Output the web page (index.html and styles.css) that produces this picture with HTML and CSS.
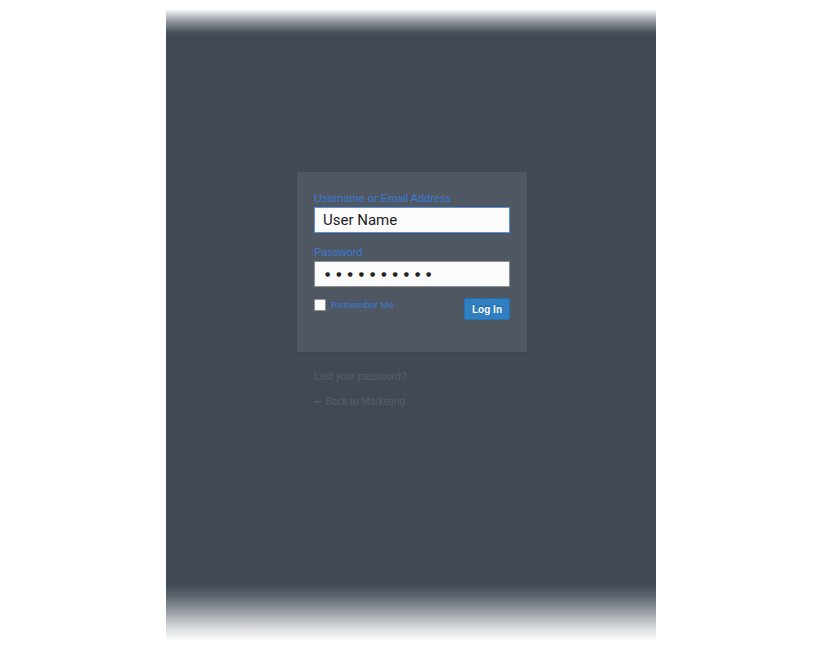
FILE: index.html
```html
<!DOCTYPE html>
<html>
<head>
<meta charset="utf-8">
<link rel="stylesheet" href="styles.css">
</head>
<body>
<div class="screen">
  <div class="login">
    <form class="card">
      <label class="label" for="user">Username or Email Address</label>
      <div class="input input-focus" id="user">User Name</div>
      <label class="label label-pass" for="pass">Password</label>
      <div class="input input-pass" id="pass">●●●●●●●●●●</div>
      <div class="row">
        <div class="remember"><span class="check"></span><span class="remember-text">Remember Me</span></div>
        <button class="btn" type="button">Log In</button>
      </div>
    </form>
    <div class="links">
      <a class="link">Lost your password?</a>
      <a class="link link-back"><span class="arrow">←</span> Back to Marketing</a>
    </div>
  </div>
</div>
</body>
</html>
```
FILE: styles.css
```css
html, body {
  margin: 0;
  padding: 0;
  background: #ffffff;
}
body {
  font-family: "Liberation Sans", Arial, sans-serif;
}
.screen {
  width: 490px;
  height: 630px;
  margin: 10px 0 0 166px;
  background: linear-gradient(to bottom,
    #f3f3f4 0px,
    #8d939a 12px,
    #4a525c 22px,
    #414a54 27px,
    #414a54 calc(100% - 56px),
    #5c636c calc(100% - 44px),
    #9a9fa5 calc(100% - 28px),
    #d8dadc calc(100% - 12px),
    #fbfbfb 100%);
  overflow: hidden;
}
.login {
  width: 230px;
  margin: 162px 0 0 131px;
}
.card {
  display: flex;
  flex-direction: column;
  background: #4f5762;
  padding: 19px 17px 32px;
  box-shadow: 0 1px 2px rgba(0,0,0,0.08);
  margin: 0;
}
.label {
  display: block;
  font-size: 11px;
  line-height: 14px;
  color: #3c7ad4;
  margin-bottom: 2px;
}
.label-pass {
  margin-top: 12px;
}
.input {
  box-sizing: border-box;
  height: 26px;
  background: #fbfbfb;
  border: 1px solid #8c8f94;
  font-family: Roboto, "Liberation Sans", sans-serif;
  font-size: 15px;
  line-height: 24px;
  color: #1e1e1e;
  padding: 0 8px;
}
.input-focus {
  border-color: #5a92dc;
}
.input-pass {
  font-family: "DejaVu Sans", sans-serif;
  font-size: 6px;
  letter-spacing: 6px;
  padding-left: 10px;
  color: #222;
}
.row {
  display: flex;
  justify-content: space-between;
  align-items: flex-start;
  margin-top: 11px;
}
.remember {
  display: flex;
  align-items: center;
  margin-top: 1px;
}
.check {
  width: 12px;
  height: 12px;
  box-sizing: border-box;
  background: #fbfbfb;
  border: 1px solid #8c8f94;
  display: block;
}
.remember-text {
  font-size: 9.5px;
  color: #3c7ad4;
  margin-left: 5px;
  line-height: 12px;
}
.btn {
  box-sizing: border-box;
  width: 46px;
  height: 22px;
  background: #2f7fc1;
  border: 1px solid #2a72ae;
  border-radius: 2px;
  color: #ffffff;
  font-family: "Liberation Sans", Arial, sans-serif;
  font-size: 10px;
  font-weight: bold;
  text-shadow: 0 -1px 1px #1f5f95;
  padding: 0;
}
.links {
  display: flex;
  flex-direction: column;
  padding: 19px 17px 0;
}
.link {
  font-size: 10px;
  line-height: 12px;
  color: #56606b;
}
.link-back {
  margin-top: 13px;
}
.arrow {
  font-family: "DejaVu Sans", sans-serif;
  font-size: 10px;
}
```
